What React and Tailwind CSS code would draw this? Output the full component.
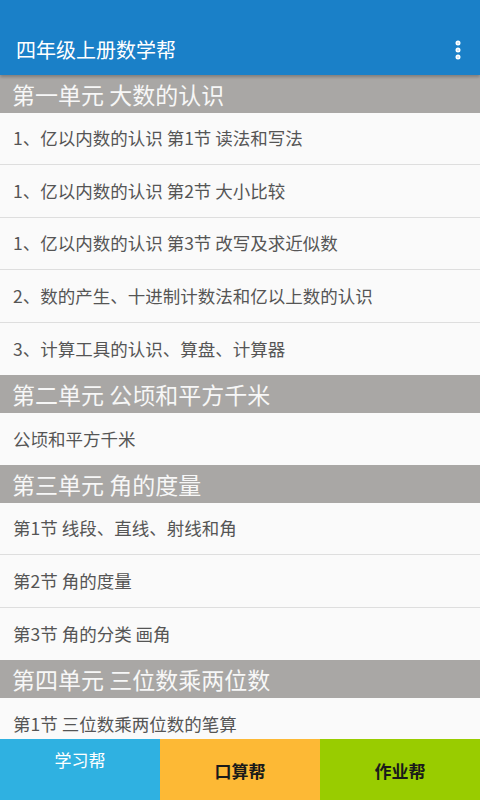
import { EllipsisVertical } from 'lucide-react'

const units = [
  {
    title: '第一单元 大数的认识',
    items: [
      '1、亿以内数的认识 第1节 读法和写法',
      '1、亿以内数的认识 第2节 大小比较',
      '1、亿以内数的认识 第3节 改写及求近似数',
      '2、数的产生、十进制计数法和亿以上数的认识',
      '3、计算工具的认识、算盘、计算器',
    ],
  },
  { title: '第二单元 公顷和平方千米', items: ['公顷和平方千米'] },
  { title: '第三单元 角的度量', items: ['第1节 线段、直线、射线和角', '第2节 角的度量', '第3节 角的分类 画角'] },
  { title: '第四单元 三位数乘两位数', items: ['第1节 三位数乘两位数的笔算'] },
]

const font = { fontFamily: '"Noto Sans CJK SC", "Noto Sans", sans-serif' }

export default function App() {
  return (
    <div className="flex h-[800px] w-[480px] flex-col overflow-hidden bg-[#fafafa]" style={font}>
      <header className="relative z-10 h-[75px] shrink-0 bg-[#1a80c8] pt-[25px] shadow-[0_2px_3px_rgba(0,0,0,0.25)]">
        <div className="flex h-[50px] items-center justify-between pl-[16px] pr-[10px]">
          <span className="text-[20px] text-white">四年级上册数学帮</span>
          <EllipsisVertical className="h-6 w-6 text-white" strokeWidth={3} />
        </div>
      </header>

      <main className="flex-1 overflow-hidden">
        {units.map((u) => (
          <section key={u.title}>
            <div className="flex h-[37.5px] items-center bg-[#a9a7a5] pl-[12px] pt-[1px] text-[23px] leading-none text-[#f7f7f7]">
              {u.title}
            </div>
            {u.items.map((it, i) => (
              <div
                key={it}
                className={`flex h-[52.5px] items-center pl-[13px] text-[17.5px] text-[#555] ${i < u.items.length - 1 ? 'border-b border-[#dedede]' : ''}`}
              >
                {it}
              </div>
            ))}
          </section>
        ))}
      </main>

      <nav className="grid h-[61px] shrink-0 grid-cols-3 text-[17px] leading-none">
        <div className="flex justify-center bg-[#2fb1e1] pt-[12px] text-white">学习帮</div>
        <div className="flex items-center justify-center bg-[#fdb935] pt-[2px] font-semibold text-[#1a1a1a]">口算帮</div>
        <div className="flex items-center justify-center bg-[#99cc00] pt-[2px] font-semibold text-[#1a1a1a]">作业帮</div>
      </nav>
    </div>
  )
}
